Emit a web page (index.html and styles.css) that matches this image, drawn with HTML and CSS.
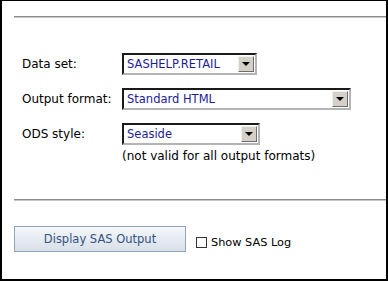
FILE: index.html
```html
<!DOCTYPE html>
<html lang="en">
<head>
    <meta charset="UTF-8">
    <title>SAS Output Options</title>
    <link rel="stylesheet" href="styles.css">
</head>
<body>
    <div class="frame">
        <div class="rule top-rule"></div>

        <div class="options">
            <div class="field">
                <span class="label">Data set:</span>
                <div class="picker picker-data">
                    <span class="picker-value">SASHELP.RETAIL</span>
                    <span class="picker-btn"><span class="arrow"></span></span>
                </div>
            </div>
            <div class="field">
                <span class="label">Output format:</span>
                <div class="picker picker-format">
                    <span class="picker-value">Standard HTML</span>
                    <span class="picker-btn"><span class="arrow"></span></span>
                </div>
            </div>
            <div class="field">
                <span class="label">ODS style:</span>
                <div class="picker picker-style">
                    <span class="picker-value">Seaside</span>
                    <span class="picker-btn"><span class="arrow"></span></span>
                </div>
            </div>
            <div class="note">(not valid for all output formats)</div>
        </div>

        <div class="rule bottom-rule"></div>

        <div class="actions">
            <button class="run-btn" type="button">Display SAS Output</button>
            <label class="log-check">
                <span class="box"></span>
                Show SAS Log
            </label>
        </div>
    </div>
</body>
</html>
```

FILE: styles.css
```css
body {
    margin: 0;
    font-family: "DejaVu Sans", Verdana, sans-serif;
    font-size: 12px;
    color: #000;
    background: #fff;
}

.frame {
    width: 388px;
    height: 281px;
    box-sizing: border-box;
    border: 2px solid #000;
    border-top-width: 1px;
    padding-left: 12px;
}

.rule {
    border-top: 1px solid #8c8c8c;
    border-bottom: 1px solid #c8c8c8;
}

.top-rule {
    margin-top: 15px;
}

.options {
    margin-top: 35px;
    padding-left: 8px;
    display: flex;
    flex-direction: column;
    gap: 13px;
}

.field {
    display: flex;
    align-items: center;
    height: 22px;
}

.label {
    width: 100px;
}

.picker {
    height: 22px;
    box-sizing: border-box;
    border: 2px solid;
    border-color: #1a1a1a #b4b4b4 #b4b4b4 #1a1a1a;
    display: flex;
    align-items: center;
    background: #fff;
}

.picker-data { width: 135px; }
.picker-format { width: 229px; }
.picker-style { width: 138px; }

.picker-value {
    flex: 1;
    padding-left: 3px;
    font-size: 11.5px;
    color: #1c1c96;
}

.picker-btn {
    width: 16px;
    height: 16px;
    margin-right: 1px;
    box-sizing: border-box;
    background: #d4d0c8;
    border: 1px solid;
    border-color: #f0f0f0 #6e6e6e #6e6e6e #f0f0f0;
    display: flex;
    align-items: center;
    justify-content: center;
}

.arrow {
    width: 0;
    height: 0;
    border-left: 4px solid transparent;
    border-right: 4px solid transparent;
    border-top: 4px solid #000;
}

.note {
    margin-top: -9px;
    padding-left: 100px;
    line-height: 14px;
}

.bottom-rule {
    margin-top: 36px;
}

.actions {
    margin-top: 25px;
    display: flex;
    align-items: center;
}

.run-btn {
    width: 172px;
    height: 26px;
    font-family: inherit;
    font-size: 11.5px;
    color: #34527f;
    border: 1px solid #8fa4bf;
    background: linear-gradient(#f5f8fb, #d7dfe8);
    padding: 0;
}

.log-check {
    display: flex;
    align-items: center;
    gap: 4px;
    margin-left: 10px;
    margin-top: 6px;
    font-size: 11.3px;
}

.box {
    width: 11px;
    height: 11px;
    box-sizing: border-box;
    border: 1px solid #333;
    background: #fff;
}
```
